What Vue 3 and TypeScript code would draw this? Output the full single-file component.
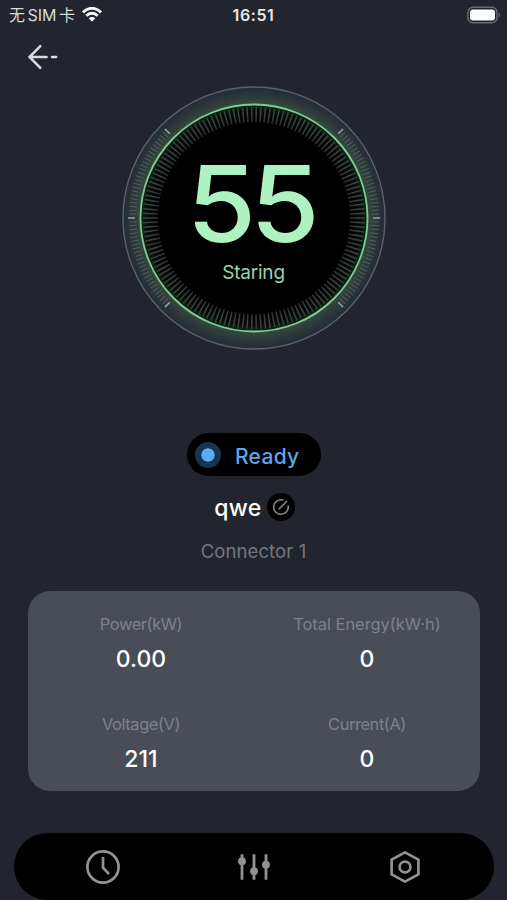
<script setup lang="ts">
interface Metric {
  label: string
  value: string
}
interface Tick {
  angle: number
  major: boolean
}

const level = 55
const metrics: Metric[] = [
  { label: 'Power(kW)', value: '0.00' },
  { label: 'Total Energy(kW·h)', value: '0' },
  { label: 'Voltage(V)', value: '211' },
  { label: 'Current(A)', value: '0' },
]

const innerTicks: number[] = Array.from({ length: 150 }, (_, i) => i * 2.4)

// Side scales: 45 degrees above and below the horizontal axis
const sideTicks: Tick[] = [0, 180].flatMap((base) =>
  Array.from({ length: 51 }, (_, i) => ({
    angle: base - 45 + i * 1.8,
    major: i % 25 === 0,
  })),
)
</script>

<template>
  <main class="screen">
    <header class="status">
      <div class="carrier">
        <span class="sim">无<b>SIM</b>卡</span>
        <svg class="wifi" width="20" height="15" viewBox="0 0 20 15">
          <g fill="none" stroke="#f4f5f7" stroke-width="2.9">
            <path d="M1 5.4C6-.1 14-.1 19 5.4" />
            <path d="M4.3 8.8c3.3-3.4 8.1-3.4 11.4 0" />
          </g>
          <path d="M6.7 11.3c1.9-1.8 4.7-1.8 6.6 0L10 14.7z" fill="#f4f5f7" />
        </svg>
      </div>
      <time class="time">16:51</time>
      <svg class="battery" width="34" height="18" viewBox="0 0 34 18">
        <rect x="1" y="1.2" width="29" height="15.6" rx="5" fill="none" stroke="#686b72" stroke-width="1.5" />
        <rect x="3" y="3.4" width="25" height="11.2" rx="3" fill="#fff" />
        <path d="M31.6 6.2c1.6.7 1.6 4.9 0 5.6z" fill="#686b72" />
      </svg>
    </header>

    <nav class="nav">
      <svg width="32" height="26" viewBox="0 0 32 26" fill="none" stroke="#d9dade" stroke-width="2.5" stroke-linecap="round">
        <path d="M13.3 2.2 2.5 13l10.8 10.8M2.8 13h16.8M25 13h4.2" />
      </svg>
    </nav>

    <section class="dial">
      <svg class="rings" width="268" height="268" viewBox="-134 -134 268 268">
        <defs>
          <radialGradient id="halo" gradientUnits="userSpaceOnUse" cx="0" cy="0" r="131">
            <stop offset=".86" stop-color="#37523f" />
            <stop offset=".9" stop-color="#30403b" />
            <stop offset=".95" stop-color="#2a3439" />
            <stop offset="1" stop-color="#252b33" />
          </radialGradient>
          <radialGradient id="core" gradientUnits="userSpaceOnUse" cx="0" cy="0" r="114">
            <stop offset=".84" stop-color="#000" />
            <stop offset=".94" stop-color="#050c08" />
            <stop offset="1" stop-color="#0e2e19" />
          </radialGradient>
          <radialGradient id="tick" gradientUnits="userSpaceOnUse" cx="0" cy="0" r="112">
            <stop offset=".85" stop-color="#2c2c2c" />
            <stop offset=".93" stop-color="#414342" />
            <stop offset="1" stop-color="#38403b" />
          </radialGradient>
        </defs>
        <circle r="131" fill="url(#halo)" stroke="#59636a" stroke-width="1.4" />
        <line
          v-for="(t, i) in sideTicks"
          :key="i"
          :x1="t.major ? 119 : 117.5"
          y1="0"
          :x2="t.major ? 126 : 125"
          y2="0"
          :stroke="t.major ? '#a0aba9' : '#505e60'"
          :stroke-width="t.major ? 1.4 : 1"
          :transform="`rotate(${t.angle})`"
        />
        <circle r="113.5" fill="url(#core)" />
        <path
          v-for="a in innerTicks"
          :key="a"
          d="M96-.75h15v1.5H96z"
          fill="url(#tick)"
          :transform="`rotate(${a})`"
        />
        <circle r="113.5" fill="none" stroke="#83ca99" stroke-width="1.8" />
      </svg>
      <div class="reading">
        <strong class="level">{{ level }}</strong>
        <span class="phase">Staring</span>
      </div>
    </section>

    <div class="state">
      <i class="lamp"></i>
      <span class="ready">Ready</span>
    </div>

    <div class="name">
      <span class="device">qwe</span>
      <button class="edit" aria-label="Edit name">
        <svg width="18" height="18" viewBox="0 0 18 18" fill="none" stroke="#858588" stroke-width="1.6" stroke-linecap="round">
          <path d="M10.6 1.9A7.3 7.3 0 1 0 16.2 8M7.2 10.9l7.4-7.4" />
        </svg>
      </button>
    </div>
    <p class="connector">Connector 1</p>

    <section class="card">
      <div v-for="m in metrics" :key="m.label" class="metric">
        <span class="label">{{ m.label }}</span>
        <span class="value">{{ m.value }}</span>
      </div>
    </section>

    <footer class="tabs">
      <svg width="36" height="36" viewBox="-18 -18 36 36" fill="none" stroke="#929295" stroke-width="2.7">
        <circle r="15.6" />
        <path d="M0-10V.8L6 7" />
      </svg>
      <svg width="36" height="36" viewBox="-18 -18 36 36" stroke="#929295" stroke-width="2.8">
        <path d="M-12-12.7v25.4M0-12.7v25.4M12-12.7v25.4" />
        <g fill="#929295" stroke="none">
          <circle cx="-12" cy="-5.8" r="3.9" />
          <circle cx="0" cy="4.2" r="3.9" />
          <circle cx="12" cy="-2.3" r="3.9" />
        </g>
      </svg>
      <svg width="36" height="36" viewBox="-18 -18 36 36" fill="none" stroke="#929295" stroke-width="2.7" stroke-linejoin="round">
        <path d="M0-14.6 13.4-7.4V7.4L0 14.6-13.4 7.4V-7.4z" />
        <circle r="5.4" />
      </svg>
    </footer>
  </main>
</template>

<style>
body {
  background: #22252d;
}
</style>

<style scoped>
.screen {
  box-sizing: border-box;
  height: 900px;
  overflow: hidden;
  display: flex;
  flex-direction: column;
  align-items: center;
  background: #22252d;
  color: #fff;
  font-family: Inter, 'Noto Sans CJK SC', sans-serif;
}
.status {
  width: 100%;
  height: 30px;
  box-sizing: border-box;
  padding: 0 6px 1px 9px;
  display: grid;
  grid-template-columns: 1fr auto 1fr;
  align-items: center;
}
.carrier {
  display: flex;
  align-items: center;
  gap: 7px;
}
.sim {
  font-size: 16px;
  line-height: 20px;
  color: #d8d9dc;
}
.sim b {
  font-weight: 400;
  margin: 0 2.5px;
}
.time {
  margin-right: 3px;
  font-size: 16px;
  font-weight: 600;
  letter-spacing: 0.6px;
  color: #e6e7ea;
}
.battery {
  justify-self: end;
}
.nav {
  width: 100%;
  height: 54px;
  box-sizing: border-box;
  padding: 14px 0 0 27px;
}
.dial {
  display: grid;
  place-items: center;
  width: 268px;
  height: 268px;
}
.rings,
.reading {
  grid-area: 1 / 1;
}
.reading {
  display: flex;
  flex-direction: column;
  align-items: center;
}
.level {
  margin-top: 5px;
  font-size: 106px;
  line-height: 98px;
  font-weight: 500;
  letter-spacing: -5.5px;
  text-indent: -5.5px;
  color: #aef2c1;
  transform: scaleX(1.06);
}
.phase {
  margin-top: 7px;
  font-size: 19px;
  line-height: 26px;
  letter-spacing: -0.2px;
  color: #9dd0ae;
}
.state {
  margin: 81px 0 0 1px;
  width: 134px;
  height: 43px;
  box-sizing: border-box;
  padding-left: 8px;
  border-radius: 22px;
  background: #000;
  display: flex;
  align-items: center;
  gap: 14px;
}
.lamp {
  width: 14px;
  height: 14px;
  border: 6px solid #19344f;
  border-radius: 50%;
  background: #5aacf8;
  background-clip: padding-box;
}
.ready {
  padding: 3px 0 0;
  font-size: 21px;
  font-weight: 500;
  letter-spacing: 0.3px;
  color: #61a5e8;
}
.name {
  margin-top: 17px;
  height: 28px;
  padding-left: 2px;
  display: flex;
  align-items: center;
  gap: 5px;
}
.device {
  padding-top: 2px;
  font-size: 23px;
  line-height: 28px;
  font-weight: 500;
  letter-spacing: 0.3px;
}
.edit {
  width: 28px;
  height: 28px;
  padding: 0;
  border: 0;
  border-radius: 50%;
  background: #000;
  display: grid;
  place-items: center;
}
.connector {
  margin: 18px 0 0;
  font-size: 18.5px;
  line-height: 24px;
  letter-spacing: 0.1px;
  color: #74777e;
}
.card {
  margin: 28px 0 0 1px;
  width: 452px;
  height: 200px;
  box-sizing: border-box;
  padding-top: 22px;
  border-radius: 22px;
  background: #494d57;
  display: grid;
  grid-template-columns: 1fr 1fr;
  grid-auto-rows: 100px;
}
.metric {
  display: flex;
  flex-direction: column;
  align-items: center;
}
.label {
  font-size: 16.4px;
  line-height: 22px;
  color: #7f828a;
}
.metric:not(:nth-child(2)) .label {
  letter-spacing: -0.4px;
}
.value {
  margin-top: 9px;
  font-size: 23px;
  line-height: 30px;
  font-weight: 500;
}
.tabs {
  margin: 42px 0 0 1px;
  width: 480px;
  height: 67px;
  flex: none;
  box-sizing: border-box;
  padding: 0 14px;
  border-radius: 34px;
  background: #000;
  display: grid;
  grid-template-columns: repeat(3, 1fr);
  place-items: center;
}
</style>
